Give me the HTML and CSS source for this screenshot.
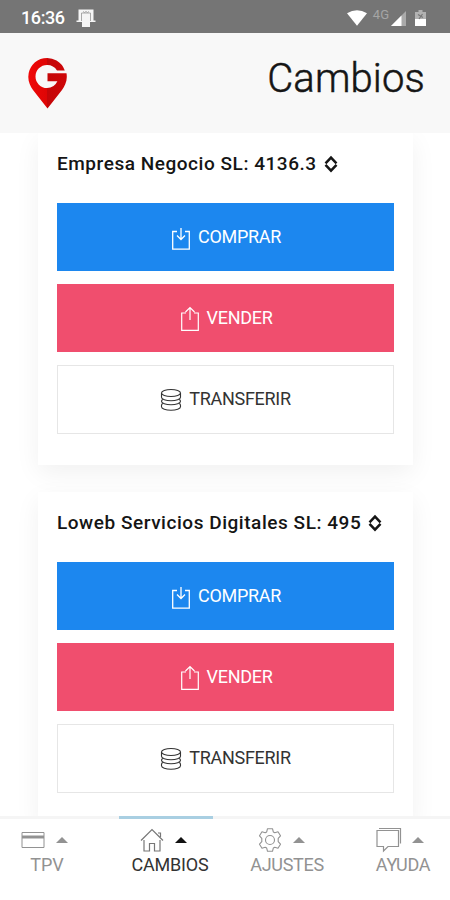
FILE: index.html
```html
<!DOCTYPE html>
<html lang="es">
<head>
<meta charset="utf-8">
<title>Cambios</title>
<link rel="stylesheet" href="styles.css">
</head>
<body>
<svg class="defs" width="0" height="0" aria-hidden="true">
  <symbol id="sort" viewBox="0 0 14 18"><path d="M1.500 8.400 7 2.600l5.500 5.800M1.500 9.800 7 15.600l5.500-5.800" fill="none" stroke="currentColor" stroke-width="2.500"/></symbol>
  <symbol id="buy" viewBox="0 0 20 24"><path d="M6 4.500H1.700v17.700h16.600V4.500H14M10 1v11M6 8.500l4 4 4-4" fill="none" stroke="currentColor" stroke-width="1.300"/></symbol>
  <symbol id="sell" viewBox="0 0 20 26"><path d="M6 7H1.700v17.300h16.600V7H14M10 14V2M5.500 6 10 1.500 14.500 6" fill="none" stroke="currentColor" stroke-width="1.200"/></symbol>
  <symbol id="coins" viewBox="0 0 22 24"><g fill="none" stroke="currentColor" stroke-width="1.100"><ellipse cx="11" cy="5" rx="9.500" ry="3.500"/><path d="M1.500 5v4.300c0 2 4.200 3.500 9.500 3.500s9.500-1.500 9.500-3.500V5M2.500 11.500c-.6.600-1 1.200-1 1.800 0 2 4.200 3.500 9.500 3.500s9.500-1.500 9.500-3.500c0-.6-.4-1.200-1-1.800M2.500 15.500c-.6.600-1 1.200-1 2v1.200c0 2 4.200 3.500 9.500 3.500s9.500-1.500 9.500-3.500v-1.200c0-.8-.4-1.400-1-2"/></g></symbol>
</svg>

<div class="status">
  <span class="clock">16:36</span>
  <svg class="notif" width="20" height="20" viewBox="0 0 20 20"><path d="M2.500 1.500h15v11h2v1.500h-5.500v5H6v-5H.5v-1.500h2z" fill="#f5f5f5"/><path d="M5.500 13V5h9v8M7 3.500l1.500 1 1.500-1 1.500 1 1.500-1" fill="none" stroke="#959595" stroke-width=".8"/></svg>
  <svg class="wifi" width="20" height="16" viewBox="0 0 20 16"><path d="M0 3.200Q10-2.500 20 3.200L10 15.800z" fill="#fff"/></svg>
  <span class="net">4G</span>
  <svg class="signal" width="15" height="15" viewBox="0 0 15 15"><path d="M15 0v15H0z" fill="#aaa"/><path d="M10.500 4.500V15H0z" fill="#fff"/></svg>
  <svg class="battery" width="11" height="16" viewBox="0 0 11 16"><path d="M3.500 0h4v2H11v14H0V2h3.500z" fill="#b2b2b2"/><path d="M0 9h11v7H0z" fill="#fff"/><path d="M3 4.500l5 3M7.500 4 4 9" stroke="#777" stroke-width="1.200"/></svg>
</div>

<header class="header">
  <svg class="logo" width="40" height="52" viewBox="0 0 40 52">
    <defs><linearGradient id="pin" gradientUnits="userSpaceOnUse" x1="0" y1="0" x2="39" y2="0"><stop offset="0" stop-color="#f00808"/><stop offset=".5" stop-color="#de0505"/><stop offset=".5" stop-color="#c40608"/><stop offset="1" stop-color="#cf0709"/></linearGradient></defs>
    <path d="M36.800 13.500A18.800 18.800 0 0 0 .3 20C.3 25 2.500 29.500 5 33L19.500 51.500 34 33C36.500 29.500 38.800 25 38.800 20Q38.800 18 38.500 16.300H19.500V24.300H29.400A11.500 11.500 0 0 1 19 31 11.500 11.500 0 0 1 19 8 11.500 11.500 0 0 1 29 13.500z" fill="url(#pin)"/>
  </svg>
  <h1 class="title">Cambios</h1>
</header>

<main class="content">
  <section class="card">
    <h2 class="account"><span>Empresa Negocio SL: 4136.3</span><svg width="14" height="18"><use href="#sort"/></svg></h2>
    <div class="actions">
      <a class="btn buy"><svg width="20" height="24"><use href="#buy"/></svg><span>COMPRAR</span></a>
      <a class="btn sell"><svg width="20" height="26"><use href="#sell"/></svg><span>VENDER</span></a>
      <a class="btn transfer"><svg width="22" height="24"><use href="#coins"/></svg><span>TRANSFERIR</span></a>
    </div>
  </section>
  <section class="card">
    <h2 class="account"><span>Loweb Servicios Digitales SL: 495</span><svg width="14" height="18"><use href="#sort"/></svg></h2>
    <div class="actions">
      <a class="btn buy"><svg width="20" height="24"><use href="#buy"/></svg><span>COMPRAR</span></a>
      <a class="btn sell"><svg width="20" height="26"><use href="#sell"/></svg><span>VENDER</span></a>
      <a class="btn transfer"><svg width="22" height="24"><use href="#coins"/></svg><span>TRANSFERIR</span></a>
    </div>
  </section>
</main>

<nav class="nav">
  <a class="tab tpv">
    <span class="icons"><svg width="24" height="26" viewBox="0 0 24 26"><path d="M1 5.500h22v15H1z" fill="none" stroke="currentColor"/><path d="M1 10h22" stroke="currentColor" stroke-width="3"/></svg><i class="caret"></i></span>
    <span class="label">TPV</span>
  </a>
  <a class="tab cambios">
    <span class="icons"><svg width="24" height="26" viewBox="0 0 24 26"><path d="M1 13.500 12 2.500l11 11M18 6h2.500v4M4 13v11h5.500v-7.500h5V24H20V13" fill="none" stroke="#777" stroke-width="1.200"/></svg><i class="caret"></i></span>
    <span class="label">CAMBIOS</span>
  </a>
  <a class="tab ajustes">
    <span class="icons"><svg width="24" height="26" viewBox="0 0 24 26"><g fill="none" stroke="currentColor" stroke-width="1.100" stroke-linejoin="round"><path d="M9.500 1.700h5l.8 3.200 1.500.8 3.200-.9 2.500 4-2.300 2.500v3.400l2.300 2.500-2.500 4-3.200-.9-1.500.8-.8 3.200h-5l-.8-3.200-1.500-.8-3.200.9-2.500-4 2.300-2.500v-3.400L1.500 8.800l2.500-4 3.200.9 1.500-.8z"/><circle cx="12" cy="13" r="4.500"/></g></svg><i class="caret"></i></span>
    <span class="label">AJUSTES</span>
  </a>
  <a class="tab ayuda">
    <span class="icons"><svg width="26" height="26" viewBox="0 0 26 26"><path d="M1 3.500h21.500v16H12L7.500 24v-4.500H1zM3 1.500h21.500v15" fill="none" stroke="currentColor" stroke-width="1.200"/></svg><i class="caret"></i></span>
    <span class="label">AYUDA</span>
  </a>
</nav>
</body>
</html>
```
FILE: styles.css
```css
* { box-sizing: border-box; }
body {
  margin: 0;
  height: 900px;
  display: flex;
  flex-direction: column;
  overflow: hidden;
  background: #fff;
  color: #151515;
  font-family: Roboto, "Liberation Sans", sans-serif;
}
.defs { position: absolute; }
svg { display: block; flex: none; }

.status {
  flex: none;
  height: 33px;
  display: flex;
  align-items: center;
  padding: 2px 24px 0 21px;
  background: #757575;
  color: #fff;
}
.clock { width: 55px; font-size: 18px; font-weight: 500; letter-spacing: -.4px; }
.wifi { margin-left: auto; }
.net { margin: -6px 2px 0 6px; font-size: 13px; line-height: 14px; color: #a5a5a5; }
.signal { margin-top: 2px; }
.battery { margin-left: 9px; }

.header {
  flex: none;
  height: 100px;
  display: flex;
  justify-content: space-between;
  align-items: flex-start;
  padding: 24px 25px 0 28px;
  background: #f8f8f8;
}
.title {
  margin: -2px 0 0;
  font-size: 40px;
  line-height: 47px;
  font-weight: 300;
  letter-spacing: .15px;
  -webkit-text-stroke: .5px currentColor;
}

.content {
  flex: 1;
  min-height: 0;
  overflow: hidden;
  display: flex;
  flex-direction: column;
  gap: 27px;
  padding: 0 37px 0 38px;
}
.card {
  flex: none;
  height: 332px;
  padding: 20px 19px 0;
  background: #fff;
  box-shadow: 0 8px 24px rgba(0, 0, 0, .06);
}
.account {
  height: 22px;
  margin: 0 0 28px;
  display: flex;
  align-items: center;
  gap: 7px;
  font-size: 19px;
  line-height: 22px;
  font-weight: 500;
  letter-spacing: .54px;
  white-space: nowrap;
}
.actions { display: flex; flex-direction: column; gap: 13px; }
.btn {
  height: 68px;
  display: flex;
  align-items: center;
  justify-content: center;
  gap: 7px;
  padding: 0 0 2px 1px;
  font-size: 18px;
  letter-spacing: -.3px;
  color: #fff;
}
.btn svg { margin-top: 5px; }
.buy { background: #1c87ef; }
.sell { background: #f04e6e; }
.sell svg { margin-top: 4px; }
.transfer { height: 69px; padding-left: 0; color: #333; border: 1px solid #e6e6e6; }
.transfer svg { margin-top: 3px; }

.nav {
  flex: none;
  position: relative;
  height: 84px;
  display: flex;
  padding-left: 2px;
  border-top: 3px solid #f5f5f5;
  color: #929292;
}
.tab { flex: none; display: flex; flex-direction: column; align-items: center; padding-top: 8px; }
.icons { display: flex; align-items: center; gap: 11px; }
.caret { border: 6px solid transparent; border-top: 0; border-bottom-color: currentColor; }
.label { margin-top: 1px; font-size: 18px; line-height: 21px; }
.tpv { width: 90px; }
.tpv .icons { margin-right: 6px; }
.cambios { width: 156px; color: #111; }
.cambios .icons { margin-right: 14px; }
.cambios::before { content: ""; position: absolute; top: -3px; left: 119px; width: 94px; height: 3px; background: #a9cfe2; }
.cambios .label { color: #333; letter-spacing: -.2px; }
.ajustes { width: 78px; }
.ajustes .icons { margin-right: 11px; }
.ajustes .label { letter-spacing: -.3px; }
.ayuda { width: 124px; margin-left: 15px; }
.ayuda .icons { gap: 10px; margin-right: 6px; }
.ayuda .label { letter-spacing: -.3px; }
```
